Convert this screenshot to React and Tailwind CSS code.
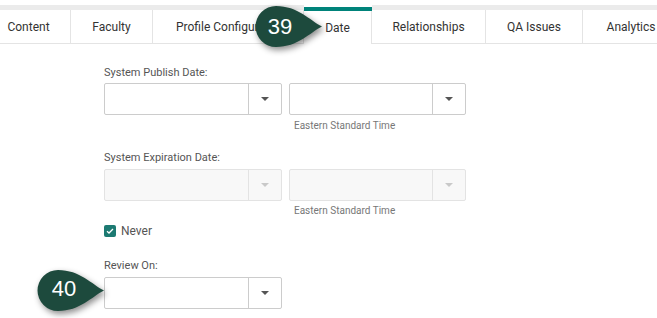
import React from "react";

function Caret({ disabled }) {
  return (
    <svg width="8" height="4" viewBox="0 0 8 4">
      <path d="M0 0H8L4 4Z" fill={disabled ? "#c9c9c9" : "#555555"} />
    </svg>
  );
}

function Dropdown({ width, disabled }) {
  const box = disabled
    ? "border-[#e3e3e3] bg-[#f8f8f8]"
    : "border-[#cccccc] bg-white";
  const div = disabled ? "border-[#e3e3e3]" : "border-[#cccccc]";
  return (
    <div className={`flex h-[32px] ${width} border rounded-[2px] ${box}`}>
      <div className="flex-1" />
      <div className={`w-[33px] border-l ${div} flex items-center justify-center`}>
        <Caret disabled={disabled} />
      </div>
    </div>
  );
}

function Tab({ w, children, left }) {
  return (
    <div className={`flex flex-col shrink-0 ${w}`}>
      <div className="h-[5px] bg-[#ebebeb]" />
      <div
        className={`flex-1 flex items-center ${left ? "justify-start pl-[23px]" : "justify-center"} overflow-hidden whitespace-nowrap border-r border-b border-[#e4e4e4] text-[12px] text-[#333333]`}
      >
        {children}
      </div>
    </div>
  );
}

function Bubble({ cx, cy, label, tx, ty }) {
  const d = `M${cx + 46} ${cy} C${cx + 34} ${cy - 6} ${cx + 22} ${cy - 20.5} ${cx} ${cy - 20.5} A20.5 20.5 0 1 0 ${cx} ${cy + 20.5} C${cx + 22} ${cy + 20.5} ${cx + 34} ${cy + 6} ${cx + 46} ${cy} Z`;
  return (
    <>
      <svg
        className="absolute left-0 top-0 pointer-events-none"
        width="657"
        height="318"
        style={{ filter: "drop-shadow(2px 3px 3px rgba(0,0,0,0.45))" }}
      >
        <path d={d} fill="#1d4a3d" />
      </svg>
      <div
        className="absolute text-white text-[22px] leading-none font-['Liberation_Sans',Arial,sans-serif]"
        style={{ left: tx, top: ty, transform: "translate(-50%,-50%)" }}
      >
        {label}
      </div>
    </>
  );
}

export default function App() {
  return (
    <div className="relative w-[657px] h-[318px] overflow-hidden bg-white font-['Roboto',sans-serif]">
      {/* Tabs */}
      <div className="flex pt-[5px] ml-[-13px] h-[44px]">
        <Tab w="w-[84px]">Content</Tab>
        <Tab w="w-[82px]">Faculty</Tab>
        <Tab w="w-[151px]" left>
          Profile Configuration
        </Tab>
        <div className="flex flex-col shrink-0 w-[68px]">
          <div className="h-[2px]" />
          <div className="h-[4px] bg-[#00837a]" />
          <div className="flex-1 flex items-center justify-center border-r border-[#e4e4e4] text-[12px] text-[#333333]">
            Date
          </div>
        </div>
        <Tab w="w-[114px]">Relationships</Tab>
        <Tab w="w-[97px]">QA Issues</Tab>
        <Tab w="w-[97px]">Analytics</Tab>
      </div>

      {/* Form */}
      <div className="pl-[104px]">
        <div className="mt-[22px] text-[11px] leading-[14px] text-[#555555]">
          System Publish Date:
        </div>
        <div className="mt-[3px] flex gap-[7px]">
          <Dropdown width="w-[178px]" />
          <Dropdown width="w-[177px]" />
        </div>
        <div className="mt-[5px] ml-[190px] text-[10px] leading-[12px] text-[#777777]">
          Eastern Standard Time
        </div>

        <div className="mt-[19px] text-[11px] leading-[14px] text-[#555555]">
          System Expiration Date:
        </div>
        <div className="mt-[4px] flex gap-[7px]">
          <Dropdown width="w-[178px]" disabled />
          <Dropdown width="w-[177px]" disabled />
        </div>
        <div className="mt-[4px] ml-[190px] text-[10px] leading-[12px] text-[#777777]">
          Eastern Standard Time
        </div>

        <div className="mt-[8px] flex items-center gap-[5px] h-[12px]">
          <div className="w-[12px] h-[12px] rounded-[2px] bg-[#1c7a72] flex items-center justify-center">
            <svg width="8" height="6" viewBox="0 0 8 6">
              <path d="M1 3.2L3 5L7 1" fill="none" stroke="white" strokeWidth="1.3" />
            </svg>
          </div>
          <span className="text-[12px] leading-[12px] text-[#555555]">Never</span>
        </div>

        <div className="mt-[22px] text-[11px] leading-[14px] text-[#555555]">
          Review On:
        </div>
        <div className="mt-[4px]">
          <Dropdown width="w-[178px]" />
        </div>
      </div>

      <Bubble cx={276} cy={26.5} label="39" tx={280} ty={27} />
      <Bubble cx={58} cy={290.5} label="40" tx={64} ty={289} />
    </div>
  );
}
